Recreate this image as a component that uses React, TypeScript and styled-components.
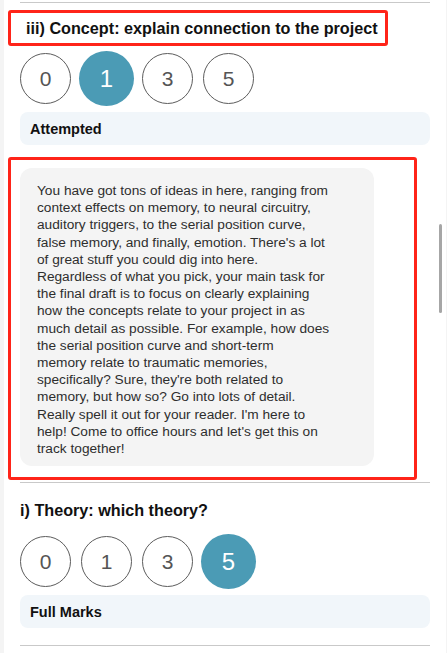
import styled, { createGlobalStyle } from "styled-components"

const GlobalStyle = createGlobalStyle`
    html, body {
        margin: 0;
        padding: 0;
        background: #f4f4f4;
        font-family: "Liberation Sans", Arial, sans-serif;
        overflow: hidden;
    }
`

const Panel = styled.div`
    background: #ffffff;
    margin: 0 1px 0 4px;
    padding: 0 16px;
    height: 653px;
    box-sizing: border-box;
    overflow: hidden;
`

const Divider = styled.div<{ $top: number }>`
    height: 1px;
    background: #c9c9c9;
    margin-top: ${p => p.$top}px;
`

const Marked = styled.div`
    border: 3px solid #ff2419;
    border-radius: 3px;
    margin-left: -12px;
`

const HeadingMark = styled(Marked)`
    margin-top: 7px;
    display: inline-block;
    padding: 0 7px 0 15px;
`

const Heading = styled.h2<{ $top?: number }>`
    margin: ${p => p.$top ?? 0}px 0 0 0;
    font-size: 16.2px;
    font-weight: 700;
    line-height: 30px;
    color: #111;
`

const ScoreRow = styled.div<{ $top: number }>`
    display: flex;
    align-items: center;
    gap: 6px;
    height: 55px;
    margin: ${p => p.$top}px 0 0 -2px;
`

const Slot = styled.div`
    width: 55px;
    height: 55px;
    display: flex;
    align-items: center;
    justify-content: center;
`

const Score = styled.div<{ $active?: boolean }>`
    box-sizing: border-box;
    width: ${p => (p.$active ? 55 : 51)}px;
    height: ${p => (p.$active ? 55 : 51)}px;
    border-radius: 50%;
    border: ${p => (p.$active ? "none" : "1px solid #5c5c5c")};
    background: ${p => (p.$active ? "#4b9bb5" : "#fff")};
    color: ${p => (p.$active ? "#fff" : "#555")};
    font-size: ${p => (p.$active ? 24 : 21)}px;
    display: flex;
    align-items: center;
    justify-content: center;
`

const Grade = styled.div`
    margin-top: 6px;
    height: 33px;
    background: #f1f6fa;
    border-radius: 8px;
    padding: 0 10px;
    display: flex;
    align-items: center;
    font-size: 14.5px;
    font-weight: 700;
    color: #111;
`

const CommentMark = styled(Marked)`
    margin-top: 12px;
    width: 394px;
    padding: 8px 0 11px 9px;
`

const Bubble = styled.div`
    width: 354px;
    box-sizing: border-box;
    background: #f4f4f4;
    border-radius: 12px;
    padding: 14px 10px 9px 17px;
    font-size: 13.7px;
    line-height: 17.2px;
    color: #2e2e2e;
    white-space: pre-line;
`

const Scrollbar = styled.div`
    position: fixed;
    left: 439px;
    top: 224px;
    width: 3px;
    height: 89px;
    border-radius: 2px;
    background: #a6a6a6;
`

const comment = `You have got tons of ideas in here, ranging from
context effects on memory, to neural circuitry,
auditory triggers, to the serial position curve,
false memory, and finally, emotion. There's a lot
of great stuff you could dig into here.
Regardless of what you pick, your main task for
the final draft is to focus on clearly explaining
how the concepts relate to your project in as
much detail as possible. For example, how does
the serial position curve and short-term
memory relate to traumatic memories,
specifically? Sure, they're both related to
memory, but how so? Go into lots of detail.
Really spell it out for your reader. I'm here to
help! Come to office hours and let's get this on
track together!`

const scores = [0, 1, 3, 5]

const Scores = ({ value, top }: { value: number; top: number }) => (
  <ScoreRow $top={top}>
    {scores.map(s => (
      <Slot key={s}>
        <Score $active={s === value}>{s}</Score>
      </Slot>
    ))}
  </ScoreRow>
)

const App = () => {
  return (
    <>
      <GlobalStyle />
      <Panel>
        <Divider $top={2} />
        <HeadingMark>
          <Heading>iii) Concept: explain connection to the project</Heading>
        </HeadingMark>
        <Scores value={1} top={5} />
        <Grade>Attempted</Grade>
        <CommentMark>
          <Bubble>{comment}</Bubble>
        </CommentMark>
        <Divider $top={2} />
        <Heading $top={12}>i) Theory: which theory?</Heading>
        <Scores value={5} top={9} />
        <Grade>Full Marks</Grade>
        <Divider $top={17} />
      </Panel>
      <Scrollbar />
    </>
  )
}

export default App
